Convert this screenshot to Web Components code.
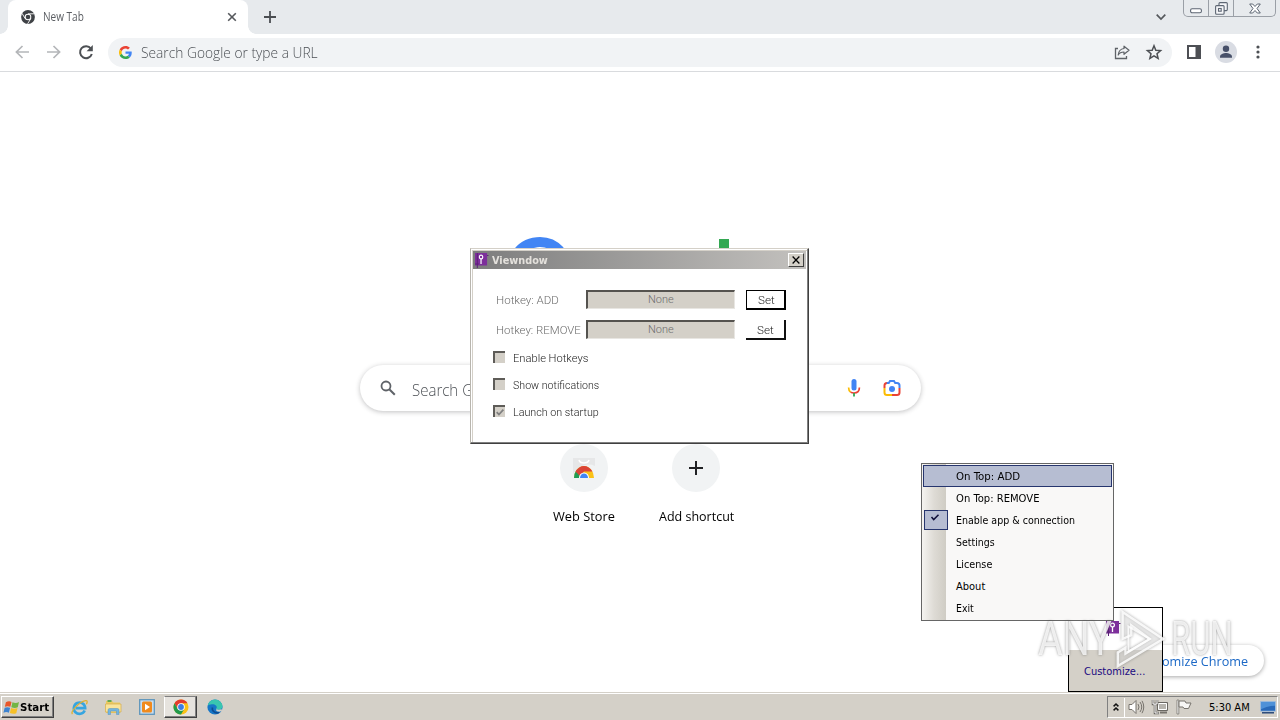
<!DOCTYPE html>
<html lang="en">
<head>
<meta charset="utf-8">
<title>Desktop</title>
<style>
  html, body { margin: 0; height: 100%; overflow: hidden; background: #fff; }
</style>
</head>
<body>
<desk-top></desk-top>

<script>
const UI_FONT = `'DejaVu Sans Condensed', 'DejaVu Sans', sans-serif`
const CHROME_FONT = `'Open Sans', 'Noto Sans', sans-serif`

/** Registers an element whose shadow root is cloned from a template */
const define = (name, html, setup) => {
  const template = document.createElement('template')
  template.innerHTML = html

  customElements.define(name, class extends HTMLElement {
    constructor() {
      super()
      this.attachShadow({ mode: 'open' }).appendChild(template.content.cloneNode(true))
    }

    connectedCallback() {
      if (setup) setup(this, this.shadowRoot)
    }
  })
}

// [viewBox, markup]
const icons = {
  chromeDark: ['0 0 14 14', `<circle cx="7" cy="7" r="6.9" fill="#3f4246"/><circle cx="7" cy="7" r="3.3" fill="#fff"/><circle cx="7" cy="7" r="2.3" fill="#3f4246"/><path d="M7 3.8h6.2M4.2 8.6L1 3.3M9.8 8.6L6.6 13.8" stroke="#fff" stroke-width=".9"/>`],
  close: ['0 0 10 10', `<path d="M1.2 1.2l7.6 7.6M8.800 1.2L1.2 8.8" stroke="#55585c" stroke-width="1.6"/>`],
  plus: ['0 0 12 12', `<path d="M6 0v12M0 6h12" stroke="#4b4e52" stroke-width="1.8"/>`],
  plusDark: ['0 0 14 14', `<path d="M7 0v14M0 7h14" stroke="#202124" stroke-width="2"/>`],
  chevron: ['0 0 10 6', `<path d="M.7.7L5 5 9.3.7" fill="none" stroke="#55585c" stroke-width="1.7"/>`],
  back: ['0 0 14 14', `<path d="M14 7H1.5M7.5 1L1.4 7l6.1 6" fill="none" stroke="#b4b6b9" stroke-width="1.7"/>`],
  forward: ['0 0 14 14', `<path d="M0 7h12.5M6.5 1l6.1 6-6.1 6" fill="none" stroke="#b4b6b9" stroke-width="1.7"/>`],
  reload: ['0 0 14 14', `<path d="M11.9 3.6A6 6 0 1 0 12.8 9" fill="none" stroke="#4d5054" stroke-width="2"/><path d="M13.8 0v6.2H7.6z" fill="#4d5054"/>`],
  google: ['0 0 48 48', `<path fill="#EA4335" d="M24 9.5c3.5 0 6.7 1.2 9.2 3.6l6.9-6.9C35.9 2.4 30.5 0 24 0 14.6 0 6.5 5.4 2.6 13.2l8 6.2C12.4 13.7 17.7 9.5 24 9.5z"/><path fill="#4285F4" d="M47 24.6c0-1.6-.2-3.1-.4-4.6H24v9h12.9c-.6 3-2.2 5.5-4.7 7.2l7.7 6C44.4 38 47 32 47 24.6z"/><path fill="#FBBC05" d="M10.5 28.6c-.5-1.5-.8-3-.8-4.6s.3-3.1.8-4.6l-8-6.2C.9 16.5 0 20.1 0 24s.9 7.5 2.6 10.8z"/><path fill="#34A853" d="M24 48c6.5 0 11.9-2.1 15.9-5.8l-7.7-6c-2.2 1.4-4.9 2.3-8.2 2.3-6.3 0-11.6-4.2-13.5-9.9l-8 6.2C6.5 42.6 14.6 48 24 48z"/>`],
  share: ['0 0 16 16', `<path d="M4 4.500H1.500v10h11V12" fill="none" stroke="#5f6368" stroke-width="1.3"/><path d="M10 2.2l5 4.1-5 4V8C7.2 8 5.3 9 4.2 11c.3-3.5 2.2-6 5.8-6.500z" fill="none" stroke="#5f6368" stroke-width="1.200" stroke-linejoin="round"/>`],
  star: ['0 0 16 16', `<path d="M8 1.8l1.8 4.4 4.8.4-3.6 3.1 1.1 4.6L8 11.8l-4.1 2.5L5 9.7 1.4 6.6l4.8-.4z" fill="none" stroke="#4d5054" stroke-width="1.5"/>`],
  panel: ['0 0 14 14', `<path d="M0 0h14v14H0zM2 2v10h6.5V2z" fill="#4d4f54" fill-rule="evenodd"/>`],
  avatar: ['0 0 22 22', `<circle cx="11" cy="11" r="11" fill="#d9dce3"/><circle cx="11" cy="7.7" r="3.2" fill="#475069"/><path d="M5 16.7v-1.3c0-2.3 3.6-3.5 6-3.5s6 1.2 6 3.5v1.3z" fill="#475069"/>`],
  dots: ['0 0 4 14', `<g fill="#4d5054"><circle cx="2" cy="2" r="1.6"/><circle cx="2" cy="7" r="1.6"/><circle cx="2" cy="12" r="1.6"/></g>`],
  search: ['0 0 16 16', `<circle cx="6" cy="6" r="4.5" fill="none" stroke="#5f6368" stroke-width="1.8"/><path d="M9.3 9.3l5.5 5.5" stroke="#5f6368" stroke-width="2"/>`],
  mic: ['0 0 14 20', `<rect x="4.5" y="1" width="5" height="11.5" rx="2.5" fill="#4285f4"/><path d="M1.6 9.5c0 2.1.7 3.7 2 4.7" fill="none" stroke="#fbbc04" stroke-width="1.7"/><path d="M12.4 9.5c0 3.5-2.2 5.5-5.4 5.5-1.3 0-2.5-.3-3.4-.9" fill="none" stroke="#ea4335" stroke-width="1.7"/><path d="M7 15v3.5" stroke="#34a853" stroke-width="1.8"/>`],
  lens: ['0 0 18 18', `<g fill="none" stroke-width="2"><path d="M1.5 9V6.500a2.500 2.500 0 0 1 2.500-2.500" stroke="#ea4335"/><path d="M3.800 4h2L7 2h4l1.200 2H14a2.500 2.500 0 0 1 2.500 2.500V9" stroke="#4285f4"/><path d="M1.500 9v4.500A2.500 2.500 0 0 0 4 16h5" stroke="#fbbc04"/><path d="M9 16h5a2.500 2.500 0 0 0 2.500-2.500V9" stroke="#ea4335"/></g><circle cx="9" cy="10" r="3" fill="#4285f4"/>`],
  store: ['0 0 22 20', `<path d="M0 0h22v8q-11-5-22 8z" fill="#e6e7e8"/><path d="M6 2c1 4 9 4 10 0" fill="none" stroke="#fff" stroke-width="1.500"/><path d="M1 20a10 12 0 0 1 20 0z" fill="#fbc116"/><path d="M1 20a10 12 0 0 1 2.500-8L8.500 20z" fill="#1f9d55"/><path d="M2.500 13.500C6.500 6 15.500 6 19.500 13.500H11L7 18z" fill="#db4437"/><path d="M6 20a5 5.500 0 0 1 10 0z" fill="#fff"/><path d="M7 20a4 4.500 0 0 1 8 0z" fill="#4285f4"/>`],
  app: ['0 0 14 15', `<path d="M0 0h13v12.500H0z" fill="#7d2f9b"/><path d="M2.500 0v15M0 11h4M13 2.500h1.500" stroke="#5b1f78"/><circle cx="6.500" cy="4" r="1.900" fill="#7d2f9b" stroke="#fff" stroke-width="1.200"/><path d="M6.500 6v5" stroke="#fff" stroke-width="1.300"/>`],
  dialogClose: ['0 0 9 8', `<path d="M.7.5l7.6 7M8.3.5L.7 7.5" stroke="#000" stroke-width="1.5"/>`],
  tick: ['0 0 9 8', `<path d="M.8 3.500l2.500 2.800L8.300.8" fill="none" stroke="#808080" stroke-width="2"/>`],
  menuTick: ['0 0 8 7', `<path d="M.5 3l2.200 2.600L7.500.8" fill="none" stroke="#10103a" stroke-width="1.500"/>`],
  winMin: ['0 0 12 6', `<rect x=".6" y=".8" width="10.8" height="4" rx="1.5" fill="#fff" stroke="#5d6673" stroke-width="1.1"/>`],
  winRestore: ['0 0 13 13', `<g fill="#f5f6f8" stroke="#5d6673" stroke-width="1.1"><rect x="4" y=".6" width="8.3" height="8" rx="1"/><rect x=".6" y="3.6" width="8.5" height="8.6" rx="1"/><rect x="3.5" y="6.5" width="2.7" height="2.7"/></g>`],
  winClose: ['0 0 12 11', `<path d="M.7 1h3L6 3.5 8.3 1h3L8 5.500l3.300 4.500h-3L6 7.500 3.700 10h-3L4 5.500z" fill="#fff" stroke="#5d6673" stroke-width="1" stroke-linejoin="round"/>`],
  flag: ['0 0 16 16', `<path d="M2 2.500Q5 .5 8 2L6.800 7.300Q4 6 .9 7.300z" fill="#e8572a"/><path d="M9 2.300Q12.500 4 16 2.200L14.700 7.700Q11.500 9.300 7.800 7.600z" fill="#72b543"/><path d="M.7 8.300Q3.500 7 6.500 8.300L5.200 13.500Q2.500 12-.6 13.500z" fill="#3c83d0"/><path d="M7.500 8.600Q11 10.300 14.400 8.600L13.100 14Q10 15.600 6.300 13.900z" fill="#f6c026"/>`],
  ie: ['0 0 18 18', `<path d="M14.5 12.2A6 6 0 1 1 15 9.6H5" fill="none" stroke="#36a5e0" stroke-width="2.8"/><path d="M1.5 16C-.8 13.5 8 3.5 15.5 1.8c2-.4 2 1.5.8 3.7" fill="none" stroke="#dfb133" stroke-width="1.4"/>`],
  folder: ['0 0 17 16', `<path d="M1 2h6l1.5 1.5H15V14H1z" fill="#eccb63"/><path d="M2.5 1h4v2h-4z" fill="#62a852"/><path d="M.5 5h15.500v8H.5z" fill="#f9e49b" stroke="#d4ae4b" stroke-width=".7"/><path d="M3 15.500v-4.500q0-1.500 1.500-1.500h8q1.500 0 1.500 1.500v4.500h-2.500V12h-6v3.500z" fill="#73b5df" stroke="#5592bd" stroke-width=".5"/>`],
  media: ['0 0 16 16', `<rect x=".7" y=".7" width="14.6" height="14.6" fill="#c8def0" stroke="#5f96bc" stroke-width="1.3"/><rect x="3" y="2.5" width="10" height="11" rx="1.5" fill="#f08a1d"/><path d="M6 4.800L11 8l-5 3.300z" fill="#fff"/>`],
  chrome: ['0 0 16 16', `<circle cx="8" cy="8" r="7.5" fill="#fbc116"/><path d="M1.5 4.25A7.5 7.5 0 0 1 14.5 4.25H8L4.75 9.9z" fill="#e33b2e"/><path d="M1.5 4.25A7.5 7.5 0 0 0 8 15.5L11.25 9.9H4.75z" fill="#229a4b"/><circle cx="8" cy="8" r="3.8" fill="#fff"/><circle cx="8" cy="8" r="2.9" fill="#3d7de4"/>`],
  edge: ['0 0 16 16', `<circle cx="8" cy="8" r="7.6" fill="#1676c7"/><path d="M.6 7A7.5 7.5 0 0 1 15.5 7.3c0 2.5-2 3.5-4.2 3.5-2 0-2.5-.8-1.7-1.7C10.5 7 8 5 5 5.2 2.8 5.3 1.2 6 .6 7z" fill="#39c6b0"/><path d="M5.5 8.5c-1 3.3 2.3 6.3 6.5 5" fill="none" stroke="#0e4d92" stroke-width="1.6"/><path d="M9.5 9.1c-1 1.3 1.5 2.3 5 1.2l1 1.300-3 1.200c-3 0-4-1.200-3-2.700z" fill="#d4d0c8"/>`],
  up: ['0 0 6 8', `<path d="M.6 3.4L3 1l2.4 2.4M.6 7.4L3 5l2.4 2.4" fill="none" stroke="#111" stroke-width="1.5"/>`],
  sound: ['0 0 17 16', `<path d="M1 5.5h3L8 1.5v13l-4-4H1z" fill="#fff" stroke="#77736d" stroke-width="1"/><path d="M10 5q2 3 0 6M12 3q3.5 5 0 10M14 1.8q3.5 6.2 0 12.4" fill="none" stroke="#77736d" stroke-width="1"/>`],
  network: ['0 0 17 16', `<path d="M5.5 3.5h10v8h-10z" fill="#b7b4ae" stroke="#6a6762"/><path d="M6.5 4.5h8v6h-8z" fill="none" stroke="#fff"/><path d="M8 13.5h7" stroke="#77736d" stroke-width="2"/><path d="M1 1v4h4V1M3 5v9h4" fill="none" stroke="#66635e" stroke-width="2.5"/><path d="M1 1v4h4V1M3 5v9h3.5" fill="none" stroke="#fff" stroke-width="1"/>`],
  action: ['0 0 16 16', `<path d="M1 1h1.8v14H1z" fill="#fff" stroke="#77736d" stroke-width=".8"/><path d="M3 2h6l1 2h5l-2.5 5.5H8l-1-1.5H3z" fill="#f7f6f4" stroke="#77736d"/>`],
  monitor: ['0 0 16 14', `<path d="M.5.5h15v10.5H.5z" fill="#2869b9" stroke="#a8c5e3" stroke-width=".8"/><path d="M1 1h14v4Q8 5 1 9z" fill="#4e91d8"/><path d="M2 12.7h12" stroke="#1c3f73" stroke-width="1.5"/>`]
}

class UiIcon extends HTMLElement {
  constructor() {
    super()
    this.attachShadow({ mode: 'open' })
  }

  connectedCallback() {
    const [box, markup] = icons[this.getAttribute('name')]
    const w = this.getAttribute('w')
    const h = this.getAttribute('h') || w
    this.shadowRoot.innerHTML = `
      <style>
        :host { display: block; flex: none; width: ${w}px; height: ${h}px; }
        svg { display: block; width: 100%; height: 100%; overflow: visible; }
      </style>
      <svg viewBox="${box}" preserveAspectRatio="none" fill="none">${markup}</svg>`
  }
}
customElements.define('ui-icon', UiIcon)

// one line of text, condensed or stretched to the width in its w attribute
define('ui-text', `
  <style>
    :host { display: block; flex: none; white-space: nowrap; }
    span { display: inline-block; transform-origin: 0 50%; }
  </style>
  <span><slot></slot></span>
`, (host, root) => {
  const span = root.querySelector('span')
  const width = Number.parseFloat(host.getAttribute('w'))
  host.style.width = `${width}px`
  requestAnimationFrame(() => {
    span.style.transform = `scaleX(${width / span.offsetWidth})`
  })
})

define('tab-strip', `
  <style>
    :host { display: flex; height: 34px; background: #e7eaed; padding-left: 8px; font: 12px/18px ${CHROME_FONT}; color: #5a5d62; }
    .tab { position: relative; display: flex; align-items: center; width: 240px; box-sizing: border-box; padding: 0 11px 0 13px; background: #fff; border-radius: 8px 8px 0 0; }
    .tab::before, .tab::after { content: ''; position: absolute; bottom: 0; width: 8px; height: 8px; }
    .tab::before { left: -8px; background: radial-gradient(circle at 0 0, transparent 7.5px, #fff 8px); }
    .tab::after { right: -8px; background: radial-gradient(circle at 100% 0, transparent 7.5px, #fff 8px); }
    .tab ui-text { margin-left: 8px; }
    .tab .x, .list { margin-left: auto; }
    .new { margin: 11px 0 0 16px; }
    .list { margin-top: 14px; }
    .buttons { display: flex; width: 93px; height: 17px; margin: 0 4px 0 17px; border: 1px solid #9a9fa6; border-top: 0; border-radius: 0 0 5px 5px; box-sizing: border-box; }
    .buttons div { display: flex; align-items: center; justify-content: center; border-right: 1px solid #9a9fa6; box-sizing: border-box; width: 25px; }
    .buttons div:last-child { flex: 1; border: 0; }
    .buttons .min { align-items: flex-end; padding-bottom: 2px; }
  </style>
  <div class="tab">
    <ui-icon name="chromeDark" w="14"></ui-icon>
    <ui-text w="41">New Tab</ui-text>
    <ui-icon class="x" name="close" w="10"></ui-icon>
  </div>
  <ui-icon class="new" name="plus" w="12"></ui-icon>
  <ui-icon class="list" name="chevron" w="10" h="6"></ui-icon>
  <div class="buttons">
    <div class="min"><ui-icon name="winMin" w="12" h="6"></ui-icon></div>
    <div><ui-icon name="winRestore" w="13"></ui-icon></div>
    <div><ui-icon name="winClose" w="12" h="11"></ui-icon></div>
  </div>
`)

define('tool-bar', `
  <style>
    :host { display: flex; align-items: center; height: 38px; box-sizing: border-box; padding: 0 20px 1px 15px; background: #fff; border-bottom: 1px solid #d9dbde; }
    .nav { display: flex; gap: 18px; }
    .omnibox { flex: 1; display: flex; align-items: center; height: 29px; margin: 0 15px 0 15px; padding: 0 10px 0 11px; border-radius: 15px; background: #f1f3f5; color: #4c5055; font: 300 15px/20px ${CHROME_FONT}; }
    .omnibox ui-text { margin: 0 auto 0 9px; }
    .omnibox .share { margin-right: 16px; }
    .avatar { margin: 0 19px 0 14px; }
  </style>
  <div class="nav">
    <ui-icon name="back" w="14"></ui-icon>
    <ui-icon name="forward" w="14"></ui-icon>
    <ui-icon name="reload" w="14"></ui-icon>
  </div>
  <div class="omnibox">
    <ui-icon name="google" w="13"></ui-icon>
    <ui-text w="177">Search Google or type a URL</ui-text>
    <ui-icon class="share" name="share" w="16"></ui-icon>
    <ui-icon name="star" w="16"></ui-icon>
  </div>
  <ui-icon name="panel" w="14"></ui-icon>
  <ui-icon class="avatar" name="avatar" w="22"></ui-icon>
  <ui-icon name="dots" w="4" h="14"></ui-icon>
`)

define('shortcut-tile', `
  <style>
    :host { display: flex; flex-direction: column; align-items: center; width: 112px; font: 13px/20px ${CHROME_FONT}; color: #000; }
    .disc { display: flex; align-items: center; justify-content: center; width: 48px; height: 48px; margin-bottom: 14px; border-radius: 50%; background: #f1f3f4; }
  </style>
  <div class="disc"><slot name="icon"></slot></div>
  <slot></slot>
`)

define('new-tab-page', `
  <style>
    :host { position: relative; flex: 1; display: flex; flex-direction: column; align-items: center; background: #fff; }
    .logo { display: block; width: 272px; height: 92px; margin-top: 165px; overflow: visible; }
    .search { display: flex; align-items: center; width: 561px; height: 46px; box-sizing: border-box; margin: 36px 0 0 1px; padding: 0 20px; border-radius: 23px; background: #fff; box-shadow: 0 1px 5px rgba(32, 33, 36, .28); font: 300 16px/22px ${CHROME_FONT}; color: #4c5055; }
    .search ui-text { margin: 3px auto 0 16px; }
    .search .lens { margin-left: 22px; }
    .tiles { display: flex; margin-top: 33px; }
    .customize { position: absolute; right: 16px; bottom: 16px; display: flex; align-items: center; justify-content: flex-end; width: 160px; height: 31px; box-sizing: border-box; padding: 2px 16px 0 0; border-radius: 16px; background: #fff; box-shadow: 0 1px 4px rgba(0, 0, 0, .35); color: #1b68c6; font: 12.5px/16px ${CHROME_FONT}; }
  </style>
  <svg class="logo" viewBox="0 0 272 92">
    <path d="M56 14A28 28 0 1 0 63.500 35H36" fill="none" stroke="#4285f4" stroke-width="10"/>
    <path d="M215 2h10v66h-10z" fill="#34a853"/>
  </svg>
  <div class="search">
    <ui-icon name="search" w="16"></ui-icon>
    <ui-text w="61">Search G</ui-text>
    <ui-icon name="mic" w="14" h="20"></ui-icon>
    <ui-icon class="lens" name="lens" w="18"></ui-icon>
  </div>
  <div class="tiles">
    <shortcut-tile><ui-icon slot="icon" name="store" w="22" h="20"></ui-icon><ui-text w="62">Web Store</ui-text></shortcut-tile>
    <shortcut-tile><ui-icon slot="icon" name="plusDark" w="14"></ui-icon><ui-text w="75">Add shortcut</ui-text></shortcut-tile>
  </div>
  <div class="customize"><ui-text w="86">omize Chrome</ui-text></div>
`)

define('hotkey-row', `
  <style>
    :host { display: flex; align-items: flex-start; height: 20px; margin-bottom: 10px; color: #6c6c6c; }
    .label { width: 90px; padding-top: 4px; }
    .field { display: flex; justify-content: center; width: 149px; height: 19px; box-sizing: border-box; margin-right: 11px; padding-top: 1px; background: #d4d0c8; border: 1px solid; border-width: 2px 1px 1px 2px; border-color: #55534f #e8e6e2 #e8e6e2 #55534f; }
    button { display: flex; justify-content: center; align-items: center; width: 40px; height: 20px; padding: 3px 0 0; margin: 0; background: #fff; color: #222; font: inherit; border: 0; border-right: 2px solid #111; border-bottom: 2px solid #111; border-radius: 0; }
    :host([default]) button { padding-top: 2px; border: 1px solid #000; border-right-width: 2px; border-bottom-width: 2px; }
  </style>
  <div class="label"><slot></slot></div>
  <div class="field"><ui-text w="26">None</ui-text></div>
  <button><ui-text w="17">Set</ui-text></button>
`)

define('check-row', `
  <style>
    :host { display: flex; align-items: center; height: 27px; color: #222; }
    .box { display: flex; align-items: center; justify-content: center; width: 12px; height: 12px; box-sizing: border-box; margin: 0 8px 3px -3px; background: #d4d0c8; border: 2px solid; border-width: 2px 0 0 2px; border-color: #5e5c58; }
    ui-icon { display: none; }
    :host([checked]) ui-icon { display: block; }
  </style>
  <div class="box"><ui-icon name="tick" w="8" h="7"></ui-icon></div>
  <slot></slot>
`)

define('app-dialog', `
  <style>
    :host { display: block; box-sizing: border-box; width: 339px; height: 196px; padding: 1px; background: #fff; border: 1px solid; border-color: #d4d0c8 #404040 #404040 #b8b5ae; box-shadow: inset -1px -1px #808080, inset 1px 1px #fff, inset 2px 2px #d4d0c8; font: 300 11px/14px 'Roboto', 'Liberation Sans', sans-serif; }
    header { display: flex; align-items: center; height: 18px; margin: 1px 1px 0; padding: 0 2px 0 2px; background: linear-gradient(90deg, #7d7d7d, #c3c1be); color: #e4e1dc; font: bold 11px/14px ${UI_FONT}; }
    header ui-text { margin: 1px auto 0 4px; }
    .close { display: flex; align-items: center; justify-content: center; width: 16px; height: 14px; box-sizing: border-box; background: #d4d0c8; border: 1px solid; border-color: #fff #404040 #404040 #fff; }
    main { padding: 21px 0 0 24px; }
    .checks { margin-top: -5px; }
  </style>
  <header>
    <ui-icon name="app" w="13" h="15"></ui-icon>
    <ui-text w="56">Viewndow</ui-text>
    <div class="close"><ui-icon name="dialogClose" w="8" h="8"></ui-icon></div>
  </header>
  <main>
    <hotkey-row default><ui-text w="63">Hotkey: ADD</ui-text></hotkey-row>
    <hotkey-row><ui-text w="85">Hotkey: REMOVE</ui-text></hotkey-row>
    <div class="checks">
      <check-row><ui-text w="75">Enable Hotkeys</ui-text></check-row>
      <check-row><ui-text w="86">Show notifications</ui-text></check-row>
      <check-row checked><ui-text w="86">Launch on startup</ui-text></check-row>
    </div>
  </main>
`)

define('menu-item', `
  <style>
    :host { display: flex; align-items: center; height: 22px; box-sizing: border-box; border: 1px solid transparent; margin: 0 1px; }
    :host([active]) { background: #b6bdd2; border-color: #26356e; }
    .mark { display: flex; align-items: flex-start; justify-content: center; width: 24px; height: 20px; box-sizing: border-box; margin-right: 8px; }
    .mark ui-icon { display: none; margin: 3px 2px 0 0; }
    :host([checked]) .mark { background: #b6bdd2; border: 1px solid #26356e; }
    :host([checked]) .mark ui-icon { display: block; }
    ::slotted(ui-text) { margin-top: 2px; }
  </style>
  <div class="mark"><ui-icon name="menuTick" w="8" h="7"></ui-icon></div>
  <slot></slot>
`)

define('context-menu', `
  <style>
    :host { display: block; box-sizing: border-box; width: 193px; height: 158px; padding: 1px 0; border: 1px solid #666; background: linear-gradient(90deg, #f5f4f1, #dedbd5 12px, #cfccc4 24px, #f9f8f7 24px); color: #000; font: 11px/16px ${UI_FONT}; }
  </style>
  <menu-item active><ui-text w="64">On Top: ADD</ui-text></menu-item>
  <menu-item><ui-text w="83">On Top: REMOVE</ui-text></menu-item>
  <menu-item checked><ui-text w="119">Enable app &amp; connection</ui-text></menu-item>
  <menu-item><ui-text w="39">Settings</ui-text></menu-item>
  <menu-item><ui-text w="36">License</ui-text></menu-item>
  <menu-item><ui-text w="29">About</ui-text></menu-item>
  <menu-item><ui-text w="18">Exit</ui-text></menu-item>
`)

define('tray-popup', `
  <style>
    :host { display: flex; flex-direction: column; box-sizing: border-box; width: 95px; height: 85px; border: 1px solid #000; background: #fff; font: 11px/12px ${UI_FONT}; color: #1a0a80; }
    .icons { display: flex; justify-content: center; height: 42px; box-sizing: border-box; padding: 13px 5px 0 0; }
    .more { flex: 1; display: flex; align-items: center; justify-content: center; padding: 2px 2px 0 0; background: #d4d0c8; }
  </style>
  <div class="icons"><ui-icon name="app" w="14" h="15"></ui-icon></div>
  <div class="more"><ui-text w="61">Customize...</ui-text></div>
`)

define('task-bar', `
  <style>
    :host { display: flex; align-items: center; height: 28px; box-sizing: border-box; padding: 2px 2px 0 1px; background: #d4d0c8; box-shadow: inset 0 1px #d4d0c8, inset 0 2px #fff; font: 11px/14px ${UI_FONT}; color: #000; }
    .start, .running { display: flex; align-items: center; box-sizing: border-box; height: 22px; border: 1px solid; border-color: #fff #404040 #404040 #fff; box-shadow: inset -1px -1px #808080; }
    .start { width: 53px; padding-left: 2px; font-weight: bold; }
    .start ui-text { margin: 1px 0 0 1px; }
    .apps { display: flex; align-items: center; margin-left: 17px; }
    .apps > * { margin-right: 17px; }
    .running { width: 33px; margin: 0 10px 0 -8px !important; justify-content: center; background: #e6e3de; border-color: #808080 #404040 #404040 #fff; }
    .tray { display: flex; align-items: center; height: 22px; box-sizing: border-box; margin-left: auto; padding-right: 1px; border: 1px solid; border-color: #808080 #fff #fff #808080; }
    .up { display: flex; align-items: center; justify-content: center; width: 16px; height: 19px; border-right: 1px solid #fff; margin-right: 3px; }
    .network { margin: 0 7px; }
    .tray ui-text { margin: 2px 10px 0 17px; }
  </style>
  <div class="start"><ui-icon name="flag" w="15" h="15"></ui-icon><ui-text w="29">Start</ui-text></div>
  <div class="apps">
    <ui-icon name="ie" w="17"></ui-icon>
    <ui-icon name="folder" w="17" h="16"></ui-icon>
    <ui-icon name="media" w="16"></ui-icon>
    <div class="running"><ui-icon name="chrome" w="16"></ui-icon></div>
    <ui-icon name="edge" w="16"></ui-icon>
  </div>
  <div class="tray">
    <div class="up"><ui-icon name="up" w="6" h="8"></ui-icon></div>
    <ui-icon name="sound" w="17" h="16"></ui-icon>
    <ui-icon class="network" name="network" w="17" h="16"></ui-icon>
    <ui-icon name="action" w="16"></ui-icon>
    <ui-text w="41">5:30 AM</ui-text>
    <ui-icon name="monitor" w="16" h="13"></ui-icon>
  </div>
`)

define('water-mark', `
  <style>
    :host { display: flex; align-items: center; height: 58px; font: 48px/32px 'Roboto', sans-serif; color: rgba(255, 255, 255, .8); text-shadow: 0 0 3px rgba(80, 80, 80, .6); }
    svg { display: block; flex: none; width: 52px; height: 58px; margin: 0 5px 0 2px; overflow: visible; filter: drop-shadow(0 0 1.5px rgba(80, 80, 80, .6)); }
  </style>
  <ui-text w="74">ANY</ui-text>
  <svg viewBox="0 0 52 60">
    <path d="M8 2l42 28L3 58V44l8-5v6l25-15L17 16v10l-9 4z" fill="rgba(255,255,255,.35)" stroke="rgba(255,255,255,.85)" stroke-width="2.5"/>
    <path d="M14 17v26l22-13z" fill="none" stroke="rgba(255,255,255,.85)" stroke-width="2"/>
  </svg>
  <ui-text w="62">RUN</ui-text>
`)

define('desk-top', `
  <style>
    :host { position: relative; display: flex; flex-direction: column; width: 1280px; height: 720px; overflow: hidden; }
    app-dialog, context-menu, tray-popup, water-mark { position: absolute; }
    app-dialog { left: 470px; top: 248px; }
    tray-popup { left: 1068px; top: 607px; }
    context-menu { left: 921px; top: 463px; }
    water-mark { left: 1038px; top: 610px; }
  </style>
  <tab-strip></tab-strip>
  <tool-bar></tool-bar>
  <new-tab-page></new-tab-page>
  <task-bar></task-bar>
  <app-dialog></app-dialog>
  <tray-popup></tray-popup>
  <context-menu></context-menu>
  <water-mark></water-mark>
`)
</script>
</body>
</html>
